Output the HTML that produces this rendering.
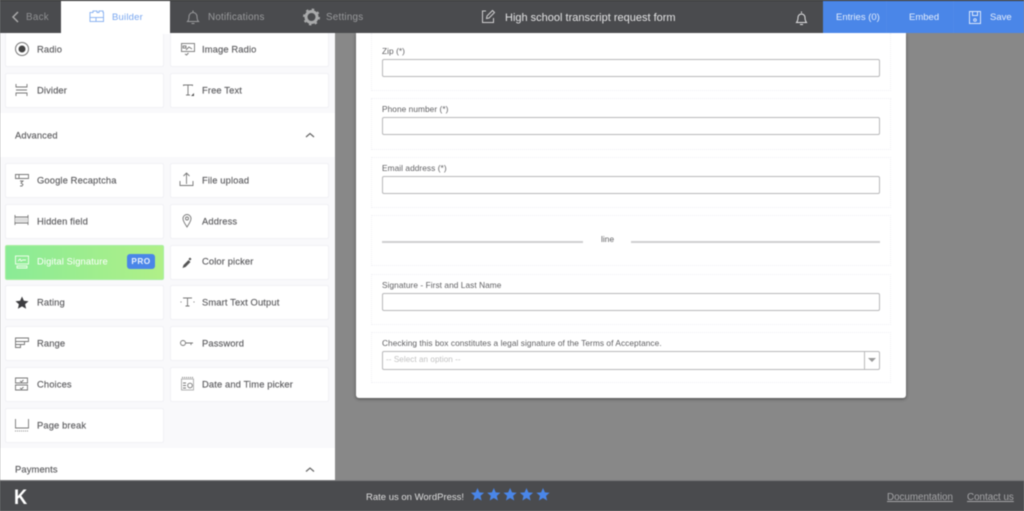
<!DOCTYPE html>
<html><head><meta charset="utf-8"><style>
*{box-sizing:border-box}
html,body{margin:0;padding:0;width:1024px;height:511px;overflow:hidden;background:#888}
body{font-family:"Liberation Sans",sans-serif;position:relative}
#w{position:absolute;left:0;top:0;width:1024px;height:511px;overflow:hidden;filter:blur(.4px)}
.a{position:absolute}
.t{position:absolute;white-space:nowrap;line-height:14px;transform:translateY(1px)}
.c{position:absolute;width:159px;height:34.500px;background:#fff;border:1px solid #f1f1f6;border-radius:2px}
.l{position:absolute;white-space:nowrap;font-size:9.4px;line-height:12px;color:#5c5c5f;letter-spacing:.12px;-webkit-text-stroke:.15px #5c5c5f;transform:translateY(.4px)}
.f{position:absolute;left:371px;width:520px;border:1px dotted #f1f1f5}
.i{position:absolute;left:382px;width:498px;height:18px;background:#fff;border:1px solid #b8b8ba;border-radius:2px}
.n{position:absolute;left:382px;font-size:8.300px;line-height:10px;color:#5f5f62;white-space:nowrap;letter-spacing:.06px}
svg{position:absolute;overflow:visible}
.s{fill:none;stroke:#777;stroke-width:.9}
</style></head><body><div id="w">
<div class="a" style="left:335px;top:33px;width:689px;height:447px;background:#888"></div>
<div class="a" style="left:0;top:33px;width:335px;height:447px;background:#fff"></div>
<div class="a" style="left:0;top:33px;width:335px;height:80px;background:#f9f9fb"></div>
<div class="a" style="left:0;top:157px;width:335px;height:291px;background:#f9f9fb"></div>

<div class="c" style="left:4.500px;top:32px"></div><div class="c" style="left:169.500px;top:32px"></div>
<div class="c" style="left:4.500px;top:73px"></div><div class="c" style="left:169.500px;top:73px"></div>
<div class="c" style="left:4.500px;top:163px"></div><div class="c" style="left:169.500px;top:163px"></div>
<div class="c" style="left:4.500px;top:204px"></div><div class="c" style="left:169.500px;top:204px"></div>
<div class="c" style="left:4.500px;top:245px;background:linear-gradient(90deg,#8aeb96,#b0f088);border-color:#a8eea0"></div><div class="c" style="left:169.500px;top:245px"></div>
<div class="c" style="left:4.500px;top:285px"></div><div class="c" style="left:169.500px;top:285px"></div>
<div class="c" style="left:4.500px;top:326px"></div><div class="c" style="left:169.500px;top:326px"></div>
<div class="c" style="left:4.500px;top:367px"></div><div class="c" style="left:169.500px;top:367px"></div>
<div class="c" style="left:4.500px;top:408px"></div>

<div class="l" style="left:37px;top:43px">Radio</div><div class="l" style="left:202px;top:43px">Image Radio</div>
<div class="l" style="left:37px;top:84px">Divider</div><div class="l" style="left:202px;top:84px">Free Text</div>
<div class="l" style="left:15px;top:129px">Advanced</div>
<div class="l" style="left:37px;top:174px">Google Recaptcha</div><div class="l" style="left:202px;top:174px">File upload</div>
<div class="l" style="left:37px;top:215px">Hidden field</div><div class="l" style="left:202px;top:215px">Address</div>
<div class="l" style="left:37px;top:255px;color:#fff;-webkit-text-stroke:0">Digital Signature</div><div class="l" style="left:202px;top:255px">Color picker</div>
<div class="l" style="left:37px;top:296px">Rating</div><div class="l" style="left:202px;top:296px">Smart Text Output</div>
<div class="l" style="left:37px;top:337px">Range</div><div class="l" style="left:202px;top:337px">Password</div>
<div class="l" style="left:37px;top:378px">Choices</div><div class="l" style="left:202px;top:378px">Date and Time picker</div>
<div class="l" style="left:37px;top:419px">Page break</div>
<div class="l" style="left:15px;top:463px">Payments</div>

<div class="a" style="left:127px;top:254px;width:28px;height:15px;background:#4a86e8;border-radius:3px;color:#e8f0fd;font-size:8.200px;font-weight:bold;line-height:15px;text-align:center;letter-spacing:.5px">PRO</div>

<svg style="left:0;top:0" width="335" height="480" viewBox="0 0 335 480">
<circle cx="22" cy="49" r="6.500" fill="none" stroke="#777"/><circle cx="22" cy="49" r="3.500" fill="#444"/>
<g class="s"><rect x="181.500" y="43.500" width="13" height="8"/><path d="M183 46h3v2h-3zM186 50l3-3 3 2M185 54l1.500 1 2-2"/></g>
<path class="s" d="M16 84v3h11v-3M16 90h11M16 96v-3h11v3"/>
<path class="s" d="M183.500 86v-1h9v1M188 85v10M186 95h4"/><path d="M191 96l3-3v3z" fill="#555"/>
<path d="M306 137l4-3.500 4 3.500" fill="none" stroke="#666" stroke-width="1.200"/><path d="M306 471.500l4-3.500 4 3.500" fill="none" stroke="#666" stroke-width="1.200"/>
<path class="s" d="M15.500 174.500h13v4h-13zM19 175v3M20 181h3l-2 2 2 1.500-1 1.500h-2"/>
<path class="s" d="M180 181v4.500h13V181M186.500 184v-11M183.500 176l3-3 3 3"/>
<path class="s" d="M15 215v10M28 215v10M15 217h13M15 223h13"/><rect x="15" y="218" width="13" height="4" fill="#ddd"/>
<path class="s" d="M187 227c-2-3.500-4-5.500-4-8.500a4 4 0 018 0c0 3-2 5-4 8.500z"/><circle class="s" cx="187" cy="218.500" r="1.500"/>
<g fill="none" stroke="#f4fff0" stroke-width=".9"><rect x="15.500" y="256" width="13" height="8"/><path d="M18 261l2-2 1 2 2-1h3M17 266h10v2H17z"/></g>
<path d="M182.500 268l1-3 5-5 2 2-5 5zM188.500 259l1.500-1.500 1.500 1.500-1.500 1.500z" fill="#555"/>
<path d="M22 296.500l1.900 4.200 4.600.5-3.400 3.100 1 4.500-4.100-2.400-4.100 2.400 1-4.500-3.400-3.100 4.600-.5z" fill="#3d3d40"/>
<path class="s" d="M183 298h9M187.500 298v8M185.500 306h4M180.500 302h1M193.500 302h1"/>
<path class="s" d="M15.500 338h13v3.500h-13zM15.500 341.500h9v3h-9zM15.500 344.500h5v3h-5z"/>
<circle class="s" cx="183" cy="343" r="2.500"/><path class="s" d="M185.500 343h7.500M191 343v2"/>
<path class="s" d="M15.500 378h12v5h-12zM15.500 385h12v5h-12zM20 381l1.500 1 2-2M20 388l1.500 1 2-2"/>
<g class="s"><rect x="181.500" y="379" width="12" height="11" stroke="#aaa"/><path d="M182 377.500h11" stroke-dasharray="1 1"/><circle cx="190" cy="385.500" r="2.300"/><path d="M183 383h3M183 385.500h3M183 388h3"/></g>
<path class="s" d="M15.500 419v9h13v-9"/><path d="M15 431h14" stroke="#888" stroke-dasharray="1 1" fill="none"/>
</svg>

<div class="a" style="left:356px;top:33px;width:550px;height:365px;background:#fff;border-radius:0 0 3px 3px;box-shadow:0 1px 3px rgba(0,0,0,.45)"></div>
<div class="f" style="top:33px;height:58px;border-top:0"></div>
<div class="f" style="top:98px;height:52px"></div>
<div class="f" style="top:157px;height:51px"></div>
<div class="f" style="top:215px;height:51px"></div>
<div class="f" style="top:274px;height:51px"></div>
<div class="f" style="top:332px;height:51px"></div>
<div class="n" style="top:46px">Zip (*)</div><div class="i" style="top:59px"></div>
<div class="n" style="top:104px">Phone number (*)</div><div class="i" style="top:117px"></div>
<div class="n" style="top:163px">Email address (*)</div><div class="i" style="top:176px"></div>
<div class="a" style="left:382px;top:241px;width:201px;height:2px;background:#cfcfd1"></div>
<div class="a" style="left:631px;top:241px;width:249px;height:2px;background:#cfcfd1"></div>
<div class="n" style="left:601px;top:234px">line</div>
<div class="n" style="top:280px">Signature - First and Last Name</div><div class="i" style="top:293px"></div>
<div class="n" style="top:338px">Checking this box constitutes a legal signature of the Terms of Acceptance.</div>
<div class="i" style="top:351px;height:19px"></div>
<div class="a" style="left:864px;top:352px;width:1px;height:17px;background:#bbb"></div>
<div class="a" style="left:868px;top:358px;border:4px solid transparent;border-top:4px solid #999;border-bottom:0"></div>
<div class="n" style="left:386px;top:355px;color:#c2c2c2;font-size:8.100px">-- Select an option --</div>

<div class="a" style="left:0;top:0;width:1024px;height:33px;background:#4a4b4e;border-top:1px solid #333"></div>
<div class="a" style="left:61px;top:1px;width:109px;height:33px;background:#fff"></div>
<div class="a" style="left:823px;top:1px;width:201px;height:32px;background:#4a86e8"></div>
<div class="a" style="left:886px;top:1px;width:1px;height:32px;background:#5089e8"></div>
<div class="a" style="left:953px;top:1px;width:1px;height:32px;background:#5089e8"></div>
<div class="t" style="left:26px;top:10px;font-size:9.800px;color:#8f9092;letter-spacing:.3px">Back</div>
<div class="t" style="left:112px;top:10px;font-size:9.500px;color:#78a6f0;letter-spacing:.2px">Builder</div>
<div class="t" style="left:208px;top:10px;font-size:9.800px;color:#9a9b9d;letter-spacing:.25px">Notifications</div>
<div class="t" style="left:326px;top:10px;font-size:9.800px;color:#9a9b9d;letter-spacing:.25px">Settings</div>
<div class="t" style="left:505px;top:10px;font-size:11px;color:#e4e4e5">High school transcript request form</div>
<div class="t" style="left:836px;top:10px;font-size:9.500px;color:#e4edfc">Entries (0)</div>
<div class="t" style="left:909px;top:10px;font-size:9.500px;color:#e4edfc">Embed</div>
<div class="t" style="left:990px;top:10px;font-size:9.500px;color:#e4edfc">Save</div>

<svg style="left:0;top:0" width="1024" height="40" viewBox="0 0 1024 40">
<path d="M18 12l-5 5 5 5" fill="none" stroke="#aaa" stroke-width="1.500"/>
<g fill="none" stroke="#8fb6f2"><path d="M90 17.500v-5h3v-1.500h4v1.500h2v-1.500h4v1.500h0.500v5zM90 17.500v4h13.500v-4M96 17.500v4"/></g>
<g fill="none" stroke="#9a9b9d"><path d="M187.500 21.500h11c-1.500-1.500-1.500-3-1.500-5a4 4 0 00-8 0c0 2 0 3.500-1.500 5zM191.500 23.500h3M193 12v-1.500"/></g>
<circle cx="311.500" cy="17" r="5.500" fill="none" stroke="#a8a9aa" stroke-width="3"/>
<circle cx="311.500" cy="17" r="7.600" fill="none" stroke="#a8a9aa" stroke-width="1.800" stroke-dasharray="2.500 3.470"/>
<g fill="none" stroke="#cfcfd0"><path d="M486 11h-3.500v11.500h11V18"/><path d="M486.500 18.500l.5-2.500 5.500-5.500 2 2-5.500 5.500z"/></g>
<g fill="none" stroke="#e2e2e3"><path d="M796.500 22.500h10c-1.200-1.500-1.500-3-1.500-5a3.500 3.500 0 00-7 0c0 2-.3 3.500-1.500 5zM800 24.500h3M801.500 13v-1.500"/></g>
<g fill="none" stroke="#dce8fb"><path d="M969.500 11.500h11v12h-11zM972.500 11.500v4h5v-4"/><circle cx="975" cy="20" r="1.300"/></g>
</svg>

<div class="a" style="left:0;top:480px;width:1024px;height:31px;background:#4a4b4e;border-top:1px solid #7a7a7c"></div>
<div class="t" style="left:13.500px;top:485.500px;font-size:21.500px;line-height:22px;font-weight:bold;color:#fff;transform:scaleX(.85);transform-origin:0 0">K</div>
<div class="t" style="left:366px;top:489.500px;font-size:9.500px;color:#dedede">Rate us on WordPress!</div>
<svg style="left:470px;top:487px" width="82" height="15" viewBox="0 0 82 15" fill="#4a86e8">
<path d="M7.500 1l1.900 4.400 4.700.4-3.600 3.100 1.100 4.600-4.100-2.500-4.100 2.500 1.100-4.600L.9 5.800l4.700-.4z"/>
<path transform="translate(16.300 0)" d="M7.500 1l1.900 4.400 4.700.4-3.600 3.100 1.100 4.600-4.100-2.500-4.100 2.500 1.100-4.600L.9 5.800l4.700-.4z"/>
<path transform="translate(32.600 0)" d="M7.500 1l1.900 4.400 4.700.4-3.600 3.100 1.100 4.600-4.100-2.500-4.100 2.500 1.100-4.600L.9 5.800l4.700-.4z"/>
<path transform="translate(49 0)" d="M7.500 1l1.900 4.400 4.700.4-3.600 3.100 1.100 4.600-4.100-2.500-4.100 2.500 1.100-4.600L.9 5.800l4.700-.4z"/>
<path transform="translate(65.500 0)" d="M7.500 1l1.900 4.400 4.700.4-3.600 3.100 1.100 4.600-4.100-2.500-4.100 2.500 1.100-4.600L.9 5.800l4.700-.4z"/>
</svg>
<div class="t" style="left:887px;top:489.500px;font-size:9.800px;color:#a5a5a7;text-decoration:underline">Documentation</div>
<div class="t" style="left:967px;top:489.500px;font-size:9.800px;color:#a5a5a7;text-decoration:underline">Contact us</div>
</div></body></html>
